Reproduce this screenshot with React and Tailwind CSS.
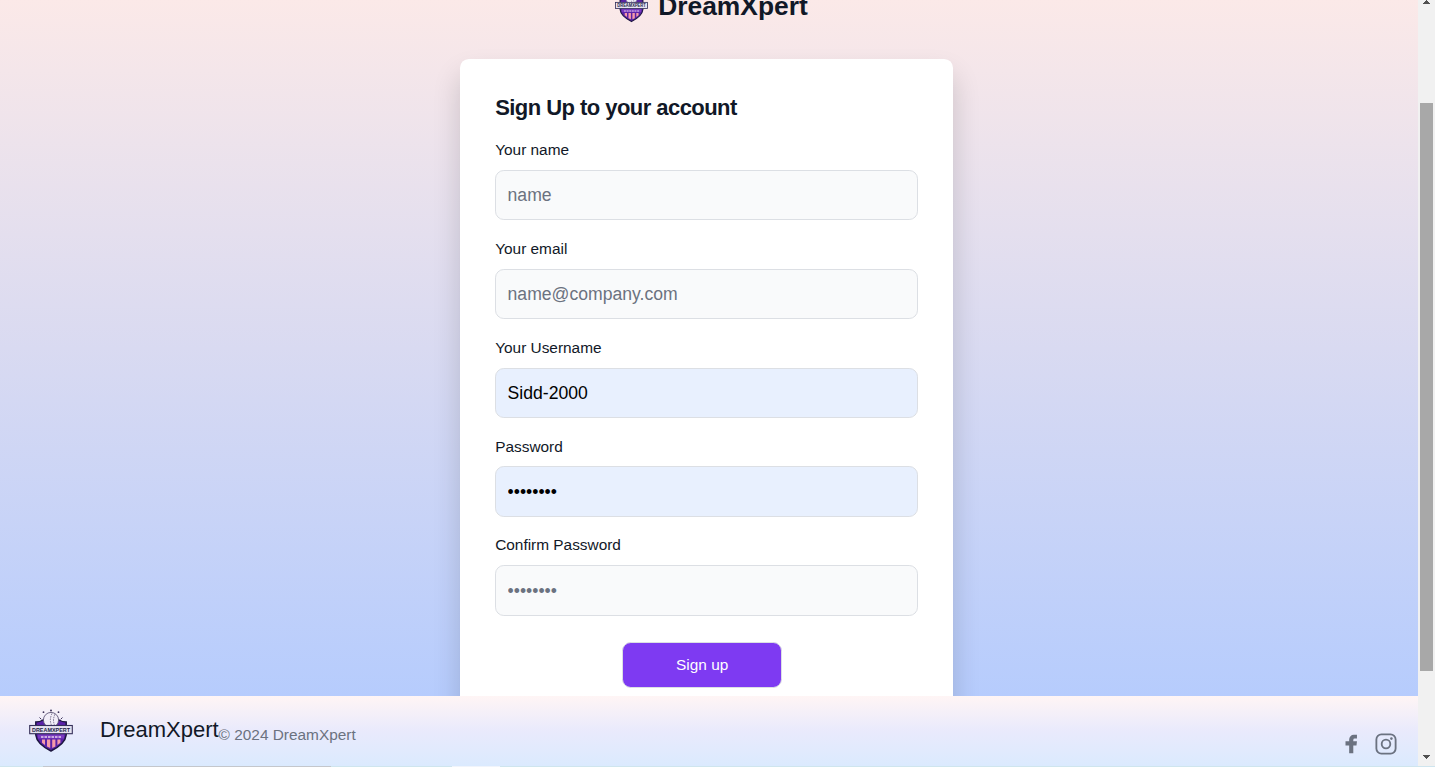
import React from "react";

function Logo({ className }) {
  return (
    <svg viewBox="0 0 44 44" className={className} aria-hidden="true">
      <g fill="#3b3158">
        <circle cx="22" cy="1.6" r="1" />
        <circle cx="14.5" cy="3.2" r="0.9" />
        <circle cx="29.5" cy="3.2" r="0.9" />
      </g>
      <path d="M10.5 8.5l1.8 1.8M33.5 8.5l-1.8 1.8" stroke="#3b3158" strokeWidth="1" />
      <path d="M6.8 13Q11 13 14 11H30Q33 13 37.2 13V26C36.5 33 30 38 22 42C14 38 7.5 33 6.8 26Z" fill="#5a22a8" stroke="#1d1740" strokeWidth="1.5" />
      <circle cx="22" cy="11" r="7.6" fill="#f1edf8" stroke="#5d5677" strokeWidth="0.9" />
      <path d="M23 4.5q-3.2 6.5 0 13M26 5.2q-3 6 0 12" fill="none" stroke="#6d6685" strokeWidth="0.9" strokeDasharray="1.6 1" />
      <path d="M13 30.500h3v5.500l-3-2.200ZM18 30.500h3.200v8.500l-3.200-1.500ZM23.200 30.500h3.200v7l-3.200 1.500ZM28.400 30.500h3v3.300l-3 2.200Z" fill="#f59aa8" />
      <path d="M9 25.500h26v4h-26z" fill="#7a3bc0" />
      <path d="M12 28h20" stroke="#e3cfee" strokeWidth="1.300" strokeDasharray="2.500 1" />
      <rect x="0.700" y="16.500" width="42.600" height="8.200" fill="#e6e3f1" stroke="#35305a" strokeWidth="1.100" />
      <text x="22" y="22.800" textAnchor="middle" textLength="38" lengthAdjust="spacingAndGlyphs" fontSize="6" fontWeight="700" fontFamily="Liberation Sans, sans-serif" fill="#211c46">
        DREAMXPERT
      </text>
    </svg>
  );
}

const fields = [
  { id: "name", label: "Your name", placeholder: "name" },
  { id: "email", label: "Your email", placeholder: "name@company.com" },
  { id: "username", label: "Your Username", value: "Sidd-2000" },
  { id: "password", label: "Password", value: "••••••••" },
  { id: "confirm", label: "Confirm Password", placeholder: "••••••••" },
];

function Field({ id, label, placeholder, value }) {
  return (
    <div className="h-[98.8px]">
      <label htmlFor={id} className="block h-[22px] text-[15.4px] leading-[22px] text-[#111827]">
        {label}
      </label>
      <input
        id={id}
        placeholder={placeholder}
        defaultValue={value}
        className={`mt-[8.8px] block h-[50.4px] w-full rounded-[8.8px] border border-[#dcdfe4] px-[11.4px] pt-[1.4px] text-[17.6px] leading-[26.4px] outline-none placeholder:text-[#6b7280] ${
          value ? "bg-[#e8f0fe] text-black" : "bg-[#f9fafb] text-[#111827]"
        }`}
      />
    </div>
  );
}

function Footer() {
  return (
    <footer className="flex h-[70px] shrink-0 items-start bg-linear-to-b from-[#fff5f5] via-[#e9eafc] to-[#dbeafe]">
      <Logo className="mt-[13px] ml-[29px] h-[44px] w-[44px]" />
      <span className="mt-[17px] ml-[27px] text-[22px] leading-[33px] text-[#111827]">DreamXpert</span>
      <span className="mt-[28px] text-[15.4px] leading-[22px] text-[#6b7280]">© 2024 DreamXpert</span>
      <div className="mt-[37px] mr-[21px] ml-auto flex gap-[13px] text-[#6b7280]">
        <svg viewBox="0 0 24 24" className="h-[22px] w-[22px]" fill="currentColor">
          <path d="M18.500 2h-3.500a5 5 0 0 0-5 5v2H6v4.500h4v8.500h4.500v-8.500h3.500l.5-4.500h-4V7.500a1.500 1.500 0 0 1 1.500-1.500h2.500z" />
        </svg>
        <svg viewBox="0 0 24 24" className="h-[22px] w-[22px]" fill="none" stroke="currentColor" strokeWidth="2">
          <rect x="1.500" y="1.500" width="21" height="21" rx="5.500" />
          <circle cx="12" cy="12" r="4.700" />
          <circle cx="17.900" cy="6.100" r="1.400" fill="currentColor" stroke="none" />
        </svg>
      </div>
    </footer>
  );
}

function Scrollbar() {
  return (
    <div className="flex h-[766px] w-[17px] flex-col items-center bg-[#f1f1f1]">
      <svg viewBox="0 0 7 4" className="h-[4px] w-[7px]" fill="#505050" shapeRendering="crispEdges">
        <path d="M3 0h1v1h1v1h1v1h1v1H0V3h1V2h1V1h1z" />
      </svg>
      <div className="mt-[99px] h-[568px] w-[13px] bg-[#a8a8a8]" />
      <svg viewBox="0 0 7 4" className="mt-[84px] h-[4px] w-[7px]" fill="#505050" shapeRendering="crispEdges">
        <path d="M0 0h7v1H6v1H5v1H4v1H3V3H2V2H1V1H0z" />
      </svg>
    </div>
  );
}

export default function App() {
  return (
    <div className="h-[767px] w-[1435px] overflow-hidden font-['Liberation_Sans',Arial,sans-serif]">
      <div className="flex h-[766px]">
        <div className="flex w-[1418px] flex-col">
          <main className="flex h-[696px] flex-col items-center overflow-hidden bg-linear-to-b from-[#fbe9e8] via-[#d9daf1] to-[#b6ccfd] pr-[5px]">
            <div className="-mt-[11px] flex h-[36px] shrink-0 items-center pl-[10px] text-[26.4px] font-semibold text-[#111827]">
              <Logo className="mt-[-2px] mr-[10px] h-[33px] w-[33px]" />
              DreamXpert
            </div>
            <section className="mt-[34px] h-[700px] w-[493px] shrink-0 rounded-[8.800px] bg-white px-[35.200px] pt-[35px] shadow-[0_16px_28px_rgba(0,0,0,0.16)]">
              <h1 className="text-[22px] leading-[27px] font-bold tracking-tight text-[#111827]">Sign Up to your account</h1>
              <form className="mt-[18.300px]">
                {fields.map((f) => (
                  <Field key={f.id} {...f} />
                ))}
                <button
                  type="button"
                  className="mt-[8.700px] ml-[127px] block h-[46px] w-[160px] rounded-[8.800px] border border-[#dcdfe4] bg-[#7e3af2] text-[15.400px] text-white"
                >
                  Sign up
                </button>
              </form>
            </section>
          </main>
          <Footer />
        </div>
        <Scrollbar />
      </div>
      <div className="flex h-px bg-[#cfe5ee]">
        <div className="ml-[43px] w-[288px] bg-[#c4c7cc]" />
        <div className="ml-[121px] w-[48px] bg-[#f0f4fb]" />
      </div>
    </div>
  );
}
